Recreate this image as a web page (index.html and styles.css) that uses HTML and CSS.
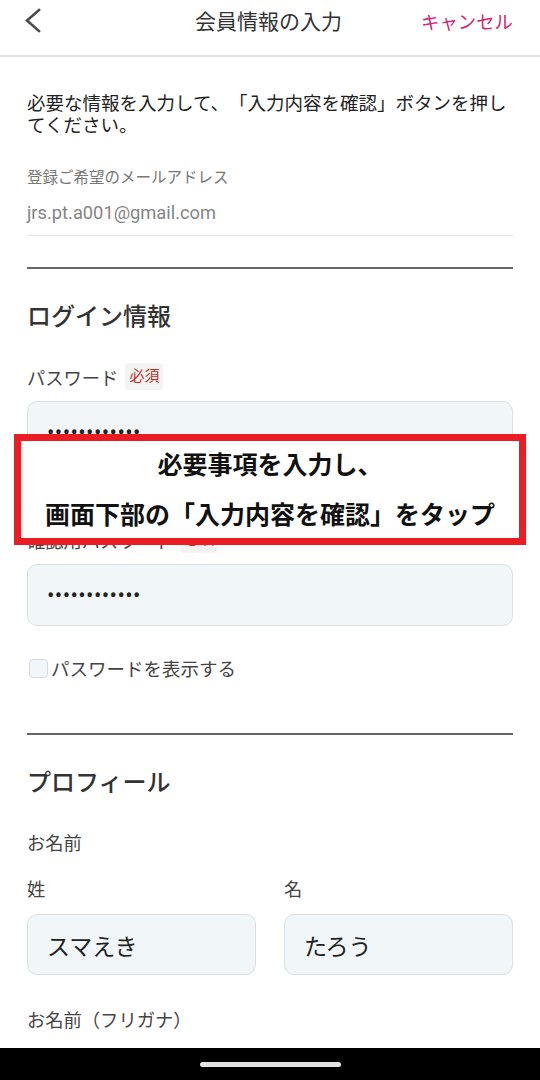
FILE: index.html
```html
<!DOCTYPE html>
<html lang="ja">
<head>
  <meta charset="UTF-8">
  <meta name="viewport" content="width=device-width, initial-scale=1.0">
  <title>会員情報の入力</title>
  <link rel="stylesheet" href="styles.css">
</head>
<body>
  <div class="screen">
    <header class="app-bar">
      <span class="back">
        <svg width="20" height="28" viewBox="0 0 20 28"><path d="M15 3 L3 13.5 L15 24" fill="none" stroke="#4a4a4a" stroke-width="2.6" stroke-linecap="square"/></svg>
      </span>
      <h1 class="title">会員情報の入力</h1>
      <span class="cancel">キャンセル</span>
    </header>

    <main class="content">
      <p class="intro">必要な情報を入力して、「入力内容を確認」ボタンを押してください。</p>

      <div class="static-field">
        <div class="static-label">登録ご希望のメールアドレス</div>
        <div class="static-value">jrs.pt.a001@gmail.com</div>
      </div>

      <hr class="divider">

      <h2 class="section-title">ログイン情報</h2>

      <div class="field">
        <div class="label">パスワード<span class="required">必須</span></div>
        <div class="input password">••••••••••••</div>
      </div>

      <div class="field field-next">
        <div class="label">確認用パスワード<span class="required">必須</span></div>
        <div class="input password">••••••••••••</div>
      </div>

      <label class="check-row">
        <span class="checkbox"></span>パスワードを表示する
      </label>

      <hr class="divider divider-profile">

      <h2 class="section-title">プロフィール</h2>

      <div class="group-label">お名前</div>
      <div class="name-grid">
        <div class="field">
          <div class="sub-label">姓</div>
          <div class="input">スマえき</div>
        </div>
        <div class="field">
          <div class="sub-label">名</div>
          <div class="input">たろう</div>
        </div>
      </div>

      <div class="group-label kana">お名前（フリガナ）</div>
    </main>

    <div class="nav-bar">
      <span class="home-pill"></span>
    </div>

    <!-- instruction banner laid over the form -->
    <div class="callout">
      <div>必要事項を入力し、</div>
      <div>画面下部の「入力内容を確認」をタップ</div>
    </div>
  </div>
</body>
</html>
```

FILE: styles.css
```css
body {
  margin: 0;
  font-family: Roboto, "Noto Sans CJK JP", sans-serif;
  color: #333;
  background: #fff;
  text-spacing-trim: space-all;
}

.screen {
  position: relative;
  width: 540px;
  height: 1080px;
  display: flex;
  flex-direction: column;
  overflow: hidden;
}

/* header */
.app-bar {
  height: 55px;
  flex-shrink: 0;
  display: grid;
  grid-template-columns: 1fr auto 1fr;
  align-items: center;
  padding: 0 27px 0 24px;
  border-bottom: 2px solid #e2e4e4;
}

.back {
  display: flex;
  align-items: center;
  margin-top: -13px;
}

.title {
  margin: 0 0 15px;
  font-size: 21px;
  font-weight: 400;
  color: #333;
}

.cancel {
  justify-self: end;
  font-size: 18.4px;
  color: #d6246e;
  margin-bottom: 14px;
}

/* body */
.content {
  flex: 1;
  padding: 0 27px;
  overflow: hidden;
}

.intro {
  margin: 36px 0 0;
  font-size: 18.5px;
  line-height: 22px;
  color: #222;
}

.static-field {
  margin-top: 31px;
  padding-bottom: 10px;
  border-bottom: 1.5px solid #e2e4e4;
}

.static-label {
  font-size: 15.5px;
  line-height: 20px;
  color: #777;
}

.static-value {
  margin-top: 13px;
  font-size: 18.3px;
  line-height: 24px;
  color: #858585;
}

.divider {
  margin: 31px 0 0;
  border: none;
  height: 2px;
  background: #666;
}

.divider-profile {
  margin-top: 55px;
}

.section-title {
  margin: 33px 0 0;
  font-size: 24px;
  line-height: 30px;
  font-weight: 500;
  color: #333;
}

.field {
  margin-top: 31px;
}

.field-next {
  margin-top: 63px;
}

.label {
  display: flex;
  align-items: center;
  height: 27px;
  font-size: 18.3px;
  color: #444;
}

.required {
  margin-left: 7px;
  padding: 0 4px;
  height: 27px;
  line-height: 27px;
  border-radius: 4px;
  background: #f3f3f3;
  color: #c3301a;
  font-size: 15px;
}

.input {
  margin-top: 11px;
  height: 60px;
  padding: 0 19px;
  display: flex;
  align-items: center;
  background: #f1f6f9;
  border: 1.5px solid #dcdfe1;
  border-radius: 10px;
  font-size: 23px;
  color: #222;
}

.password {
  font-size: 22px;
  letter-spacing: 0.4px;
  color: #222;
}

.check-row {
  display: flex;
  align-items: center;
  margin-top: 32px;
  height: 20px;
  font-size: 18.5px;
  color: #444;
}

.checkbox {
  width: 17px;
  height: 17px;
  margin: 0 3px 0 2px;
  background: #f1f6f9;
  border: 1.5px solid #d6dadd;
  border-radius: 4px;
}

.group-label {
  margin-top: 34px;
  font-size: 18.3px;
  line-height: 24px;
  color: #444;
}

.kana {
  margin-top: 34px;
}

.name-grid {
  display: grid;
  grid-template-columns: 1fr 1fr;
  column-gap: 28px;
}

.name-grid .field {
  margin-top: 22px;
}

.name-grid .input {
  margin-top: 12px;
  height: 59px;
}

.sub-label {
  font-size: 18.3px;
  line-height: 24px;
  color: #444;
}

/* android nav bar */
.nav-bar {
  height: 32px;
  flex-shrink: 0;
  background: #000;
  display: flex;
  justify-content: center;
  padding-top: 14px;
  box-sizing: border-box;
}

.home-pill {
  width: 141px;
  height: 5px;
  border-radius: 3px;
  background: #e2e2e2;
}

/* red instruction box */
.callout {
  position: absolute;
  left: 14px;
  top: 434px;
  width: 498px;
  height: 97px;
  border: 7px solid #ec1c24;
  background: #fff;
  display: flex;
  flex-direction: column;
  align-items: center;
  gap: 6px;
  font-size: 25px;
  line-height: 44px;
  font-weight: 700;
  color: #111;
  font-family: "Noto Sans CJK JP", sans-serif;
  text-spacing-trim: trim-start;
}
```
